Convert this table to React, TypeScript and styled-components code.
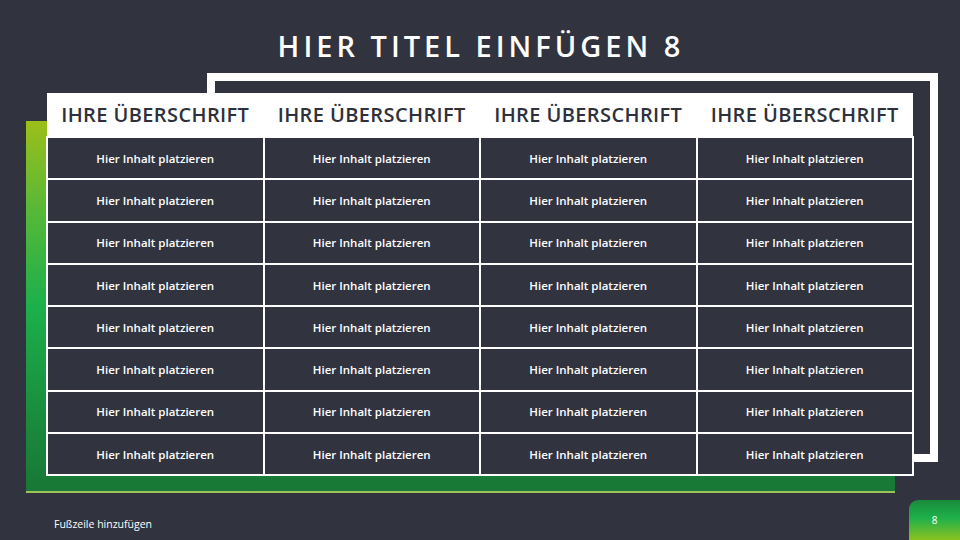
import React from "react";
import styled, { createGlobalStyle } from "styled-components";

const Global = createGlobalStyle`
  html, body { margin: 0; padding: 0; background: #31333f; }
  * { box-sizing: border-box; }
`;

const Page = styled.div`
  width: 960px;
  height: 540px;
  background: #31333f;
  display: flex;
  flex-direction: column;
  overflow: hidden;
  font-family: "Open Sans", "Liberation Sans", sans-serif;
`;

const TitleBar = styled.div`
  height: 73px;
  display: flex;
  align-items: center;
  justify-content: center;
`;

const Title = styled.h1`
  margin: 0;
  color: #ffffff;
  font-family: "Open Sans", "Liberation Sans", sans-serif;
  font-weight: 600;
  font-size: 29px;
  letter-spacing: 4px;
  line-height: 1;
  padding-left: 2px;
  margin-top: 18px;
`;

const Stage = styled.div`
  height: 420px;
  display: grid;
  grid-template-columns: 1fr;
  grid-template-rows: 1fr;
`;

const Frame = styled.div`
  grid-area: 1 / 1;
  margin-left: 207px;
  width: 731px;
  height: 389px;
  border: 8px solid #ffffff;
`;

const GreenBlock = styled.div`
  grid-area: 1 / 1;
  margin-left: 26px;
  margin-top: 48px;
  width: 869px;
  height: 372px;
  background: linear-gradient(
    to bottom,
    #9cbf1a 0%,
    #55b838 25%,
    #1cb04b 50%,
    #1a8c3d 80%,
    #187736 100%
  );
  border-bottom: 2px solid #9cc25a;
`;

const TableWrap = styled.div`
  grid-area: 1 / 1;
  margin-left: 46px;
  margin-top: 20px;
  width: 868px;
  align-self: start;
`;

const Table = styled.table`
  border-collapse: collapse;
  width: 868px;
  table-layout: fixed;
`;

const HeadCell = styled.th`
  background: #ffffff;
  color: #2e303c;
  height: 44px;
  font-family: "Open Sans", "Liberation Sans", sans-serif;
  font-weight: 600;
  font-size: 20px;
  text-align: center;
  padding: 0;
  white-space: nowrap;
  letter-spacing: 0.4px;
`;

const Cell = styled.td`
  background: #31333f;
  color: #ffffff;
  height: 42.3px;
  border: 2px solid #ffffff;
  font-family: "Open Sans", "Liberation Sans", sans-serif;
  font-weight: 600;
  font-size: 11.5px;
  text-align: center;
  padding: 0;
  white-space: nowrap;
`;

const Bottom = styled.div`
  flex: 1;
  display: flex;
  align-items: flex-start;
  justify-content: space-between;
`;

const Footer = styled.div`
  color: #ffffff;
  font-family: "Open Sans", "Liberation Sans", sans-serif;
  font-size: 10.5px;
  margin-left: 54px;
  margin-top: 24px;
`;

const Badge = styled.div`
  width: 51px;
  height: 40px;
  margin-top: 7px;
  border-top-left-radius: 9px;
  background: linear-gradient(to bottom, #1a8a3b 0%, #1eb04b 45%, #8cc21f 100%);
  color: #ffffff;
  font-family: "Open Sans", "Liberation Sans", sans-serif;
  font-size: 10px;
  display: flex;
  align-items: center;
  justify-content: center;
`;

const headers = ["IHRE ÜBERSCHRIFT", "IHRE ÜBERSCHRIFT", "IHRE ÜBERSCHRIFT", "IHRE ÜBERSCHRIFT"];
const rows = Array.from({ length: 8 }, () => Array.from({ length: 4 }, () => "Hier Inhalt platzieren"));

export default function App() {
  return (
    <>
      <Global />
      <Page>
        <TitleBar>
          <Title>HIER TITEL EINFÜGEN 8</Title>
        </TitleBar>
        <Stage>
          <Frame />
          <GreenBlock />
          <TableWrap>
            <Table>
              <thead>
                <tr>
                  {headers.map((h, i) => (
                    <HeadCell key={i}>{h}</HeadCell>
                  ))}
                </tr>
              </thead>
              <tbody>
                {rows.map((r, i) => (
                  <tr key={i}>
                    {r.map((c, j) => (
                      <Cell key={j}>{c}</Cell>
                    ))}
                  </tr>
                ))}
              </tbody>
            </Table>
          </TableWrap>
        </Stage>
        <Bottom>
          <Footer>Fußzeile hinzufügen</Footer>
          <Badge>8</Badge>
        </Bottom>
      </Page>
    </>
  );
}
